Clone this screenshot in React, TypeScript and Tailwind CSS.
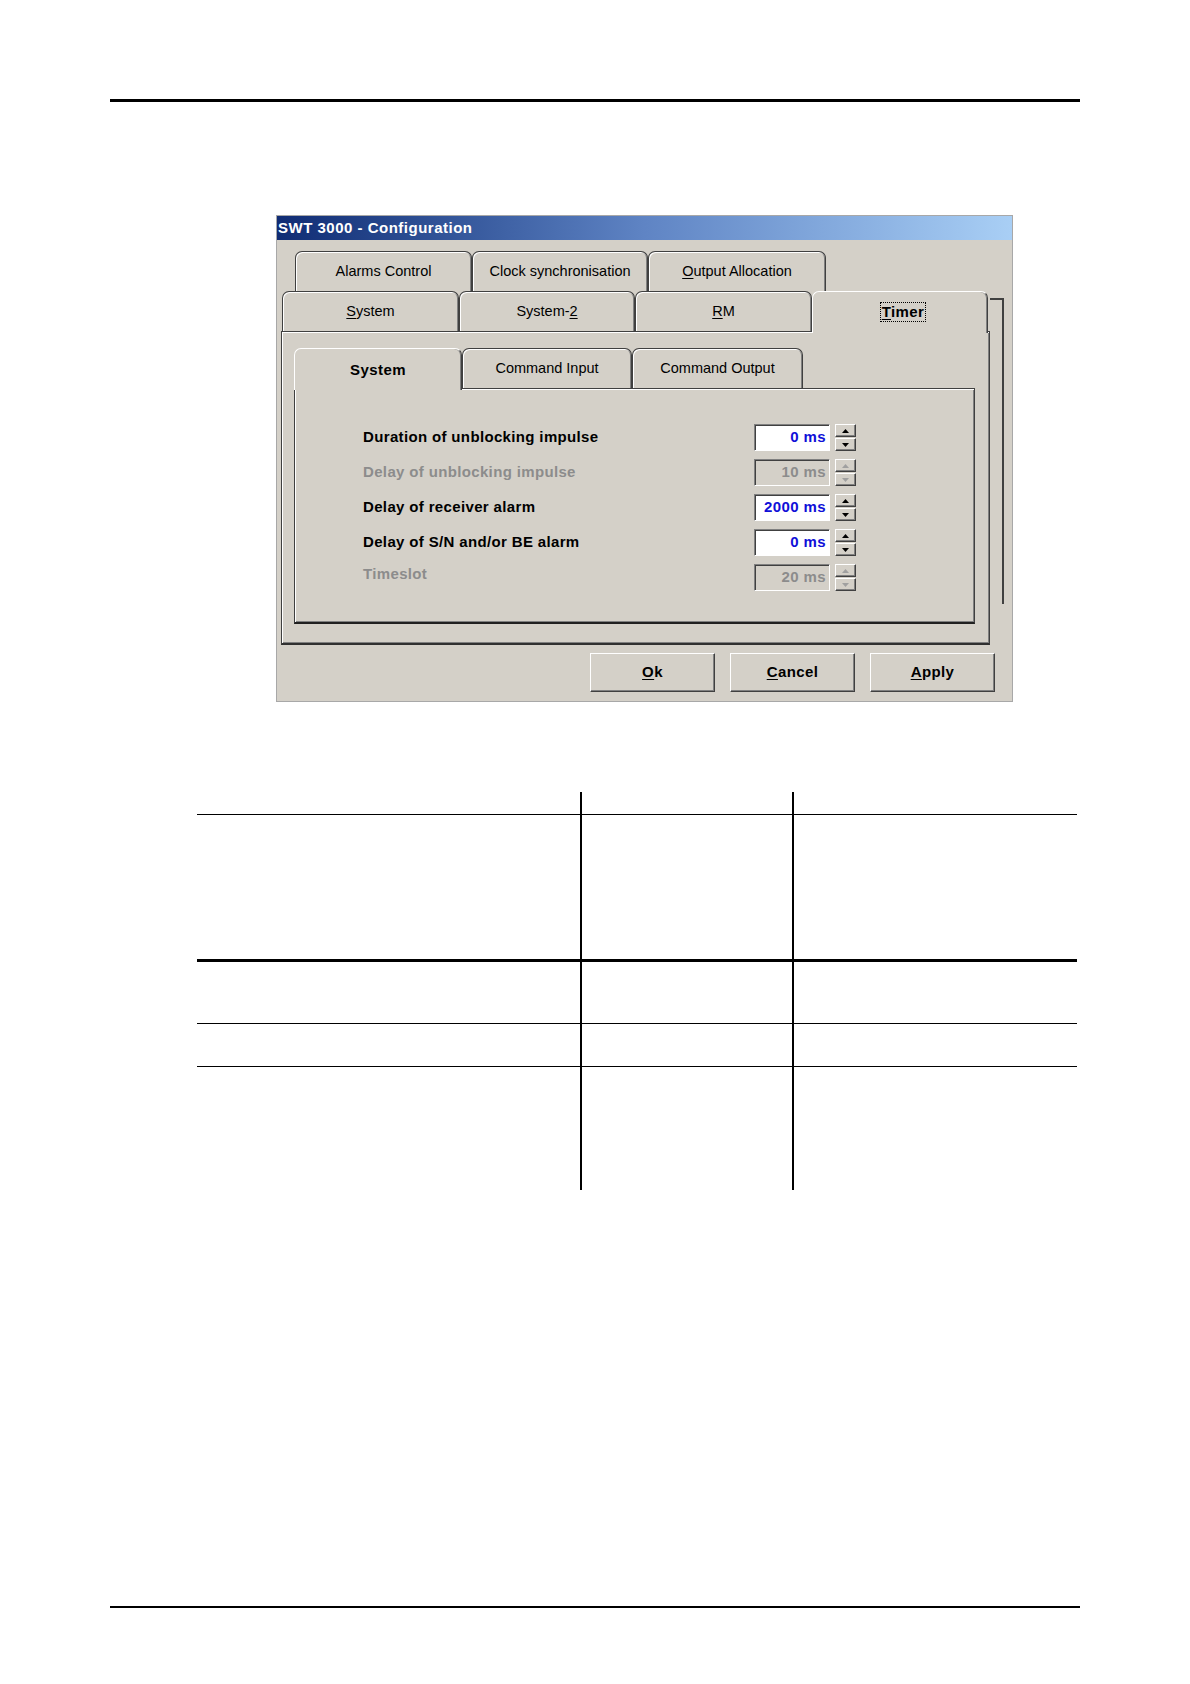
import React from 'react';

const font = "font-['Liberation_Sans',Arial,sans-serif]";

type TabProps = {
  label: React.ReactNode;
  width: string;
  selected?: boolean;
  bold?: boolean;
};

const Tab: React.FC<TabProps> = ({ label, width, selected, bold }) => {
  if (selected) {
    return (
      <div
        className={`${width} relative z-10 -mb-[2px] flex h-[42px] items-start justify-center rounded-t-[7px] border-l border-t border-r border-l-white border-t-white border-r-[#404040] bg-[#d4d0c8] pt-[10px] shadow-[inset_-1px_0_0_#808080] ${bold ? 'font-bold tracking-[0.4px] text-[15px]' : 'text-[14px]'}`}
      >
        {label}
      </div>
    );
  }
  return (
    <div
      className={`${width} flex h-[40px] items-center justify-center rounded-t-[7px] border border-b-0 border-[#404040] bg-[#d4d0c8] text-[14.5px] shadow-[inset_1px_1px_0_#ffffff,inset_-1px_0_0_#808080]`}
    >
      {label}
    </div>
  );
};

const U: React.FC<{ children: React.ReactNode }> = ({ children }) => (
  <span className="underline underline-offset-2">{children}</span>
);

const Arrow: React.FC<{ up?: boolean; disabled?: boolean }> = ({ up, disabled }) => (
  <svg width="7" height="4" viewBox="0 0 7 4">
    <path d={up ? 'M3.5 0 L7 4 L0 4 Z' : 'M0 0 L7 0 L3.5 4 Z'} fill={disabled ? '#a0a0a0' : '#000'} />
  </svg>
);

const Spinner: React.FC<{ disabled?: boolean }> = ({ disabled }) => (
  <div className="flex flex-col gap-[1px]">
    {[true, false].map((up) => (
      <div
        key={String(up)}
        className="flex h-[13px] w-[21px] items-center justify-center border border-t-white border-l-white border-r-[#404040] border-b-[#404040] bg-[#d4d0c8] shadow-[inset_-1px_-1px_0_#808080]"
      >
        <Arrow up={up} disabled={disabled} />
      </div>
    ))}
  </div>
);

type RowProps = { label: string; value: string; disabled?: boolean; raise?: boolean };

const TimerRow: React.FC<RowProps> = ({ label, value, disabled, raise }) => (
  <div className="flex h-[27px] items-center">
    <div
      className={`w-[391px] text-[15px] font-bold tracking-[0.35px] ${raise ? '-mt-[7px]' : ''} ${disabled ? 'text-[#8c8c8c]' : 'text-black'}`}
    >
      {label}
    </div>
    <div
      className={`flex h-[27px] w-[76px] items-center justify-end border border-t-[#808080] border-l-[#808080] border-r-white border-b-white pr-[3px] text-[15px] font-bold tracking-[0.4px] shadow-[inset_1px_1px_0_#404040] ${disabled ? 'bg-[#d4d0c8] text-[#8c8c8c]' : 'bg-white text-[#1010d8]'}`}
    >
      {value}
    </div>
    <div className="ml-[5px]">
      <Spinner disabled={disabled} />
    </div>
  </div>
);

const Button: React.FC<{ children: React.ReactNode }> = ({ children }) => (
  <div className="flex h-[39px] w-[125px] items-center justify-center border border-t-white border-l-white border-r-[#404040] border-b-[#404040] bg-[#d4d0c8] text-[15px] font-bold tracking-[0.4px] shadow-[inset_-1px_-1px_0_#808080]">
    {children}
  </div>
);

const Dialog: React.FC = () => (
  <div className="ml-[276px] mt-[113px] flex h-[487px] w-[737px] flex-col border border-[#a8a8a8] bg-[#d4d0c8] text-black">
    {/* Title bar */}
    <div className="flex h-[24px] items-center bg-gradient-to-r from-[#102c74] via-[#5f84c4] to-[#a9cff5] pl-[1px] text-[15px] font-bold tracking-[0.5px] text-white">
      SWT 3000 - Configuration
    </div>

    {/* Tab rows */}
    <div className="ml-[18px] mt-[11px] flex">
      <Tab width="w-[177px]" label="Alarms Control" />
      <Tab width="w-[176px]" label="Clock synchronisation" />
      <Tab width="w-[178px]" label={<span><U>O</U>utput Allocation</span>} />
    </div>
    <div className="ml-[5px] flex items-start">
      <Tab width="w-[177px]" label={<span><U>S</U>ystem</span>} />
      <Tab width="w-[176px]" label={<span>System-<U>2</U></span>} />
      <Tab width="w-[177px]" label={<span><U>R</U>M</span>} />
      <Tab
        width="w-[176px]"
        selected
        bold
        label={
          <span className="ml-[6px] border border-dotted border-black px-[1px] leading-[18px]">
            <U>T</U>imer
          </span>
        }
      />
    </div>

    {/* Outer tab page */}
    <div className="relative ml-[4px] h-[314px] w-[709px] border border-[#404040] border-b-2 border-b-[#303030] shadow-[inset_1px_1px_0_#ffffff,inset_-1px_-1px_0_#808080]">
      <div className="absolute -right-[15px] -top-[34px] h-[306px] w-[14px] border-r-2 border-t-2 border-[#404040]" />

      <div className="ml-[12px] mt-[16px] flex">
        <Tab width="w-[168px]" selected bold label={<span>System</span>} />
        <Tab width="w-[170px]" label="Command Input" />
        <Tab width="w-[171px]" label="Command Output" />
      </div>
      <div className="relative ml-[12px] flex h-[236px] w-[681px] flex-col gap-[8px] border border-[#404040] border-b-2 border-b-[#202020] pl-[68px] pt-[35px] shadow-[inset_1px_1px_0_#ffffff,inset_-1px_-1px_0_#808080]">
        <TimerRow label="Duration of unblocking impulse" value="0 ms" />
        <TimerRow label="Delay of unblocking impulse" value="10 ms" disabled />
        <TimerRow label="Delay of receiver alarm" value="2000 ms" />
        <TimerRow label="Delay of S/N and/or BE alarm" value="0 ms" />
        <TimerRow label="Timeslot" value="20 ms" disabled raise />
      </div>
    </div>

    {/* Buttons */}
    <div className="ml-[313px] mt-[8px] flex gap-[15px]">
      <Button><U>O</U>k</Button>
      <Button><U>C</U>ancel</Button>
      <Button><U>A</U>pply</Button>
    </div>
  </div>
);

const rows = [
  { h: 'h-[145px]', border: 'border-t' },
  { h: 'h-[64px]', border: 'border-t-[3px]' },
  { h: 'h-[43px]', border: 'border-t' },
  { h: 'h-[124px]', border: 'border-t' },
];

const Table: React.FC = () => (
  <div className="ml-[197px] mt-[90px] w-[880px]">
    <div className="grid h-[22px] grid-cols-[383px_212px_285px]">
      <div />
      <div className="border-l-2 border-black" />
      <div className="border-l-2 border-black" />
    </div>
    {rows.map((r, i) => (
      <div key={i} className={`grid grid-cols-[383px_212px_285px] border-black ${r.h} ${r.border}`}>
        <div />
        <div className="border-l-2 border-black" />
        <div className="border-l-2 border-black" />
      </div>
    ))}
  </div>
);

export default function App() {
  return (
    <div className={`${font} relative flex h-[1684px] w-[1190px] flex-col bg-white`}>
      <div className="ml-[110px] mt-[99px] h-[3px] w-[970px] bg-black" />
      <Dialog />
      <Table />
      <div className="ml-[110px] mt-[416px] h-[2px] w-[970px] bg-black" />
    </div>
  );
}
